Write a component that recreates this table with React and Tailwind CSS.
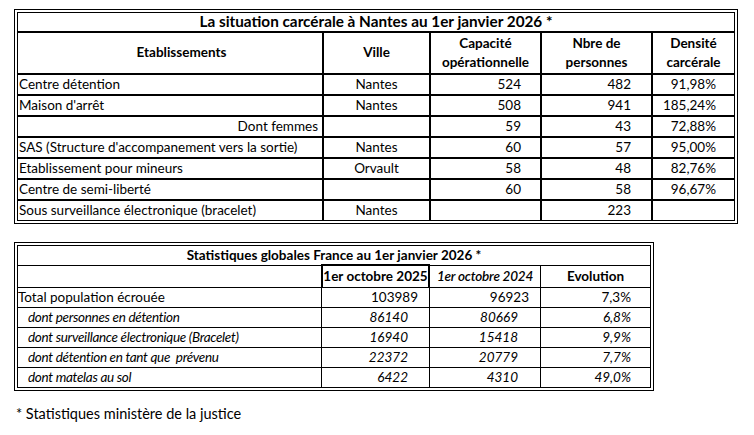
import React from "react";

const t1Rows = [
  ["Centre détention", "Nantes", "524", "482", "91,98%"],
  ["Maison d'arrêt", "Nantes", "508", "941", "185,24%"],
  ["Dont femmes", "", "59", "43", "72,88%", true],
  ["SAS (Structure d'accompanement vers la sortie)", "Nantes", "60", "57", "95,00%"],
  ["Etablissement pour mineurs", "Orvault", "58", "48", "82,76%"],
  ["Centre de semi-liberté", "", "60", "58", "96,67%"],
  ["Sous surveillance électronique (bracelet)", "Nantes", "", "223", ""],
];

const t2Rows = [
  ["Total population écrouée", "103989", "96923", "7,3%", false],
  ["dont personnes en détention", "86140", "80669", "6,8%", true],
  ["dont surveillance électronique (Bracelet)", "16940", "15418", "9,9%", true],
  ["dont détention en tant que  prévenu", "22372", "20779", "7,7%", true],
  ["dont matelas au sol", "6422", "4310", "49,0%", true],
];

function Cell({ className = "", children }) {
  return (
    <div className={"bg-white flex items-center whitespace-pre leading-none " + className}>
      {children}
    </div>
  );
}

export default function App() {
  return (
    <div
      className="w-[754px] h-[435px] bg-white text-black text-[13.5px] overflow-hidden"
      style={{ fontFamily: "Lato, 'Open Sans', sans-serif" }}
    >
      {/* Table 1 */}
      <div className="ml-[14px] mt-[9px] w-[724px] border border-black p-[2px]">
        <div className="border border-black">
          <div className="grid grid-cols-[304px_105px_109px_109px_81px] gap-[2px] bg-black">
            <Cell className="col-span-5 h-[18px] justify-center font-bold text-[15.3px]">
              La situation carcérale à Nantes au 1er janvier 2026 *
            </Cell>
            <Cell className="h-[40px] justify-center pl-[23px] font-bold">Etablissements</Cell>
            <Cell className="h-[40px] justify-center font-bold">Ville</Cell>
            <Cell className="h-[40px] flex-col justify-center font-bold gap-[6px]">
              <span>Capacité</span>
              <span>opérationnelle</span>
            </Cell>
            <Cell className="h-[40px] flex-col justify-center font-bold gap-[6px]">
              <span>Nbre de</span>
              <span>personnes</span>
            </Cell>
            <Cell className="h-[40px] flex-col justify-center font-bold gap-[6px]">
              <span>Densité</span>
              <span>carcérale</span>
            </Cell>
            {t1Rows.map((r, i) => (
              <React.Fragment key={i}>
                <Cell className={"h-[19px] " + (r[5] ? "justify-end pr-[4px]" : "pl-[1px]")}>{r[0]}</Cell>
                <Cell className="h-[19px] justify-center">{r[1]}</Cell>
                <Cell className="h-[19px] justify-end pr-[19px]">{r[2]}</Cell>
                <Cell className="h-[19px] justify-end pr-[20px]">{r[3]}</Cell>
                <Cell className="h-[19px] justify-end pr-[18px]">{r[4]}</Cell>
              </React.Fragment>
            ))}
          </div>
        </div>
      </div>

      {/* Table 2 */}
      <div className="ml-[14px] mt-[18px] w-[640px] border border-black p-[2px]">
        <div className="border border-black">
          <div className="grid grid-cols-[303px_107px_110px_109px] gap-[1px] bg-black">
            <Cell className="col-span-4 h-[19px] justify-center font-bold">
              Statistiques globales France au 1er janvier 2026 *
            </Cell>
            <Cell className="h-[21px]"></Cell>
            <div className="relative bg-white h-[21px] flex items-center justify-center font-bold leading-none whitespace-pre">
              1er octobre 2025
              <div className="absolute -left-[1px] -right-[1px] -top-[2px] bottom-0 border-x-2 border-t-2 border-black pointer-events-none"></div>
            </div>
            <Cell className="h-[21px] justify-center italic font-semibold tracking-[-0.2px]">1er octobre 2024</Cell>
            <Cell className="h-[21px] justify-center font-bold">Evolution</Cell>
            {t2Rows.map((r, i) => (
              <React.Fragment key={i}>
                <Cell className={"h-[19px] " + (r[4] ? "italic pl-[10px] tracking-[-0.3px]" : "")}>{r[0]}</Cell>
                <Cell className={"h-[19px] justify-end " + (r[4] ? "italic pr-[21px]" : "pr-[11px]")}>{r[1]}</Cell>
                <Cell className={"h-[19px] justify-end " + (r[4] ? "italic pr-[22px]" : "pr-[11px]")}>{r[2]}</Cell>
                <Cell className={"h-[19px] justify-end pr-[19px] " + (r[4] ? "italic" : "")}>{r[3]}</Cell>
              </React.Fragment>
            ))}
          </div>
        </div>
      </div>

      <div className="ml-[16px] mt-[16px] leading-none text-[14.5px]">* Statistiques ministère de la justice</div>
    </div>
  );
}
